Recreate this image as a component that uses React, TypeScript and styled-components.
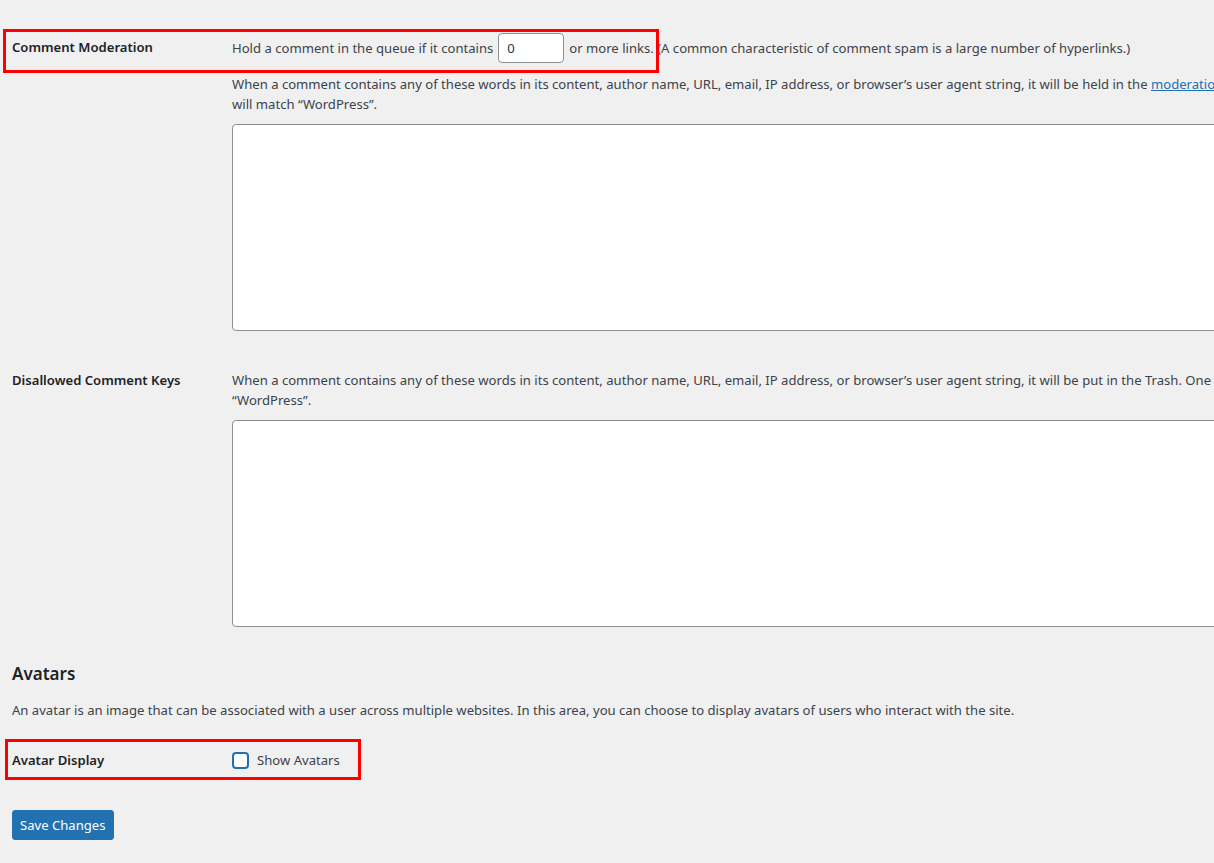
import React from "react";
import styled, { createGlobalStyle } from "styled-components";

const Global = createGlobalStyle`
  html, body { margin: 0; padding: 0; background: #f0f0f1; overflow: hidden; }
  body {
    font-family: "Noto Sans", "Open Sans", sans-serif;
    font-size: 13.1px;
    color: #3c434a;
  }
`;

const Page = styled.div`
  position: relative;
  width: 1800px;
  padding: 0 0 40px 12px;
  box-sizing: border-box;
`;

const Row = styled.div<{ $top: number }>`
  display: grid;
  grid-template-columns: 220px 1540px;
  margin-top: ${(p) => p.$top}px;
`;

const Label = styled.div<{ $pad: number }>`
  padding-top: ${(p) => p.$pad}px;
  line-height: 20px;
  font-weight: 600;
  color: #1d2327;
`;

const Cell = styled.div<{ $pad?: number }>`
  padding-top: ${(p) => p.$pad ?? 0}px;
  display: flex;
  flex-direction: column;
`;

const InlineLine = styled.div`
  display: flex;
  align-items: center;
  height: 30px;
  white-space: nowrap;
`;

const NumberInput = styled.input`
  box-sizing: border-box;
  width: 66px;
  height: 30px;
  margin: 0 5px;
  padding: 0 8px;
  border: 1px solid #8c8f94;
  border-radius: 4px;
  background: #fff;
  font: inherit;
  color: #2c3338;
`;

const Desc = styled.p<{ $top: number }>`
  margin: ${(p) => p.$top}px 0 0;
  line-height: 20px;
`;

const Link = styled.a`
  color: #2271b1;
  text-decoration: underline;
`;

const TextArea = styled.textarea`
  box-sizing: border-box;
  display: block;
  width: 99%;
  height: 207px;
  margin-top: 10px;
  border: 1px solid #8c8f94;
  border-radius: 4px;
  background: #fff;
  resize: none;
`;

const Heading = styled.h2`
  margin: 36px 0 0;
  font-size: 17px;
  line-height: 22px;
  font-weight: 600;
  color: #1d2327;
`;

const CheckLabel = styled.label`
  display: flex;
  align-items: center;
  gap: 8px;
  line-height: 20px;
`;

const Checkbox = styled.span`
  box-sizing: border-box;
  width: 17px;
  height: 17px;
  border: 2px solid #2271b1;
  border-radius: 4px;
  background: #fff;
`;

const Button = styled.button`
  display: block;
  margin-top: 40px;
  height: 30px;
  padding: 0 7px;
  border: 1px solid #2271b1;
  border-radius: 3px;
  background: #2271b1;
  color: #fff;
  font: inherit;
`;

const Highlight = styled.div<{ $x: number; $y: number; $w: number; $h: number }>`
  position: absolute;
  left: ${(p) => p.$x}px;
  top: ${(p) => p.$y}px;
  width: ${(p) => p.$w}px;
  height: ${(p) => p.$h}px;
  box-sizing: border-box;
  border: 3px solid #ff0000;
  pointer-events: none;
`;

export default function App() {
  return (
    <>
      <Global />
      <Page>
        <Row $top={0}>
          <Label $pad={37}>Comment Moderation</Label>
          <Cell $pad={33}>
            <InlineLine>
              Hold a comment in the queue if it contains
              <NumberInput defaultValue="0" />
              or more links. (A common characteristic of comment spam is a large number of hyperlinks.)
            </InlineLine>
            <Desc $top={11}>
              When a comment contains any of these words in its content, author name, URL, email, IP address, or
              browser’s user agent string, it will be held in the <Link>moderation queue</Link>. One word or IP
              address per line. It will match inside words, so “press”
              <br />
              will match “WordPress”.
            </Desc>
            <TextArea />
          </Cell>
        </Row>
        <Row $top={39}>
          <Label $pad={0}>Disallowed Comment Keys</Label>
          <Cell>
            <Desc $top={0}>
              When a comment contains any of these words in its content, author name, URL, email, IP address, or
              browser’s user agent string, it will be put in the Trash. One word or IP address per line. It will
              match inside words, so “press” will match
              <br />
              “WordPress”.
            </Desc>
            <TextArea />
          </Cell>
        </Row>
        <Heading>Avatars</Heading>
        <Desc $top={15}>
          An avatar is an image that can be associated with a user across multiple websites. In this area, you can
          choose to display avatars of users who interact with the site.
        </Desc>
        <Row $top={30}>
          <Label $pad={0}>Avatar Display</Label>
          <Cell>
            <CheckLabel>
              <Checkbox />
              Show Avatars
            </CheckLabel>
          </Cell>
        </Row>
        <Button>Save Changes</Button>
        <Highlight $x={3} $y={29} $w={656} $h={44} />
        <Highlight $x={5} $y={739} $w={356} $h={41} />
      </Page>
    </>
  );
}
